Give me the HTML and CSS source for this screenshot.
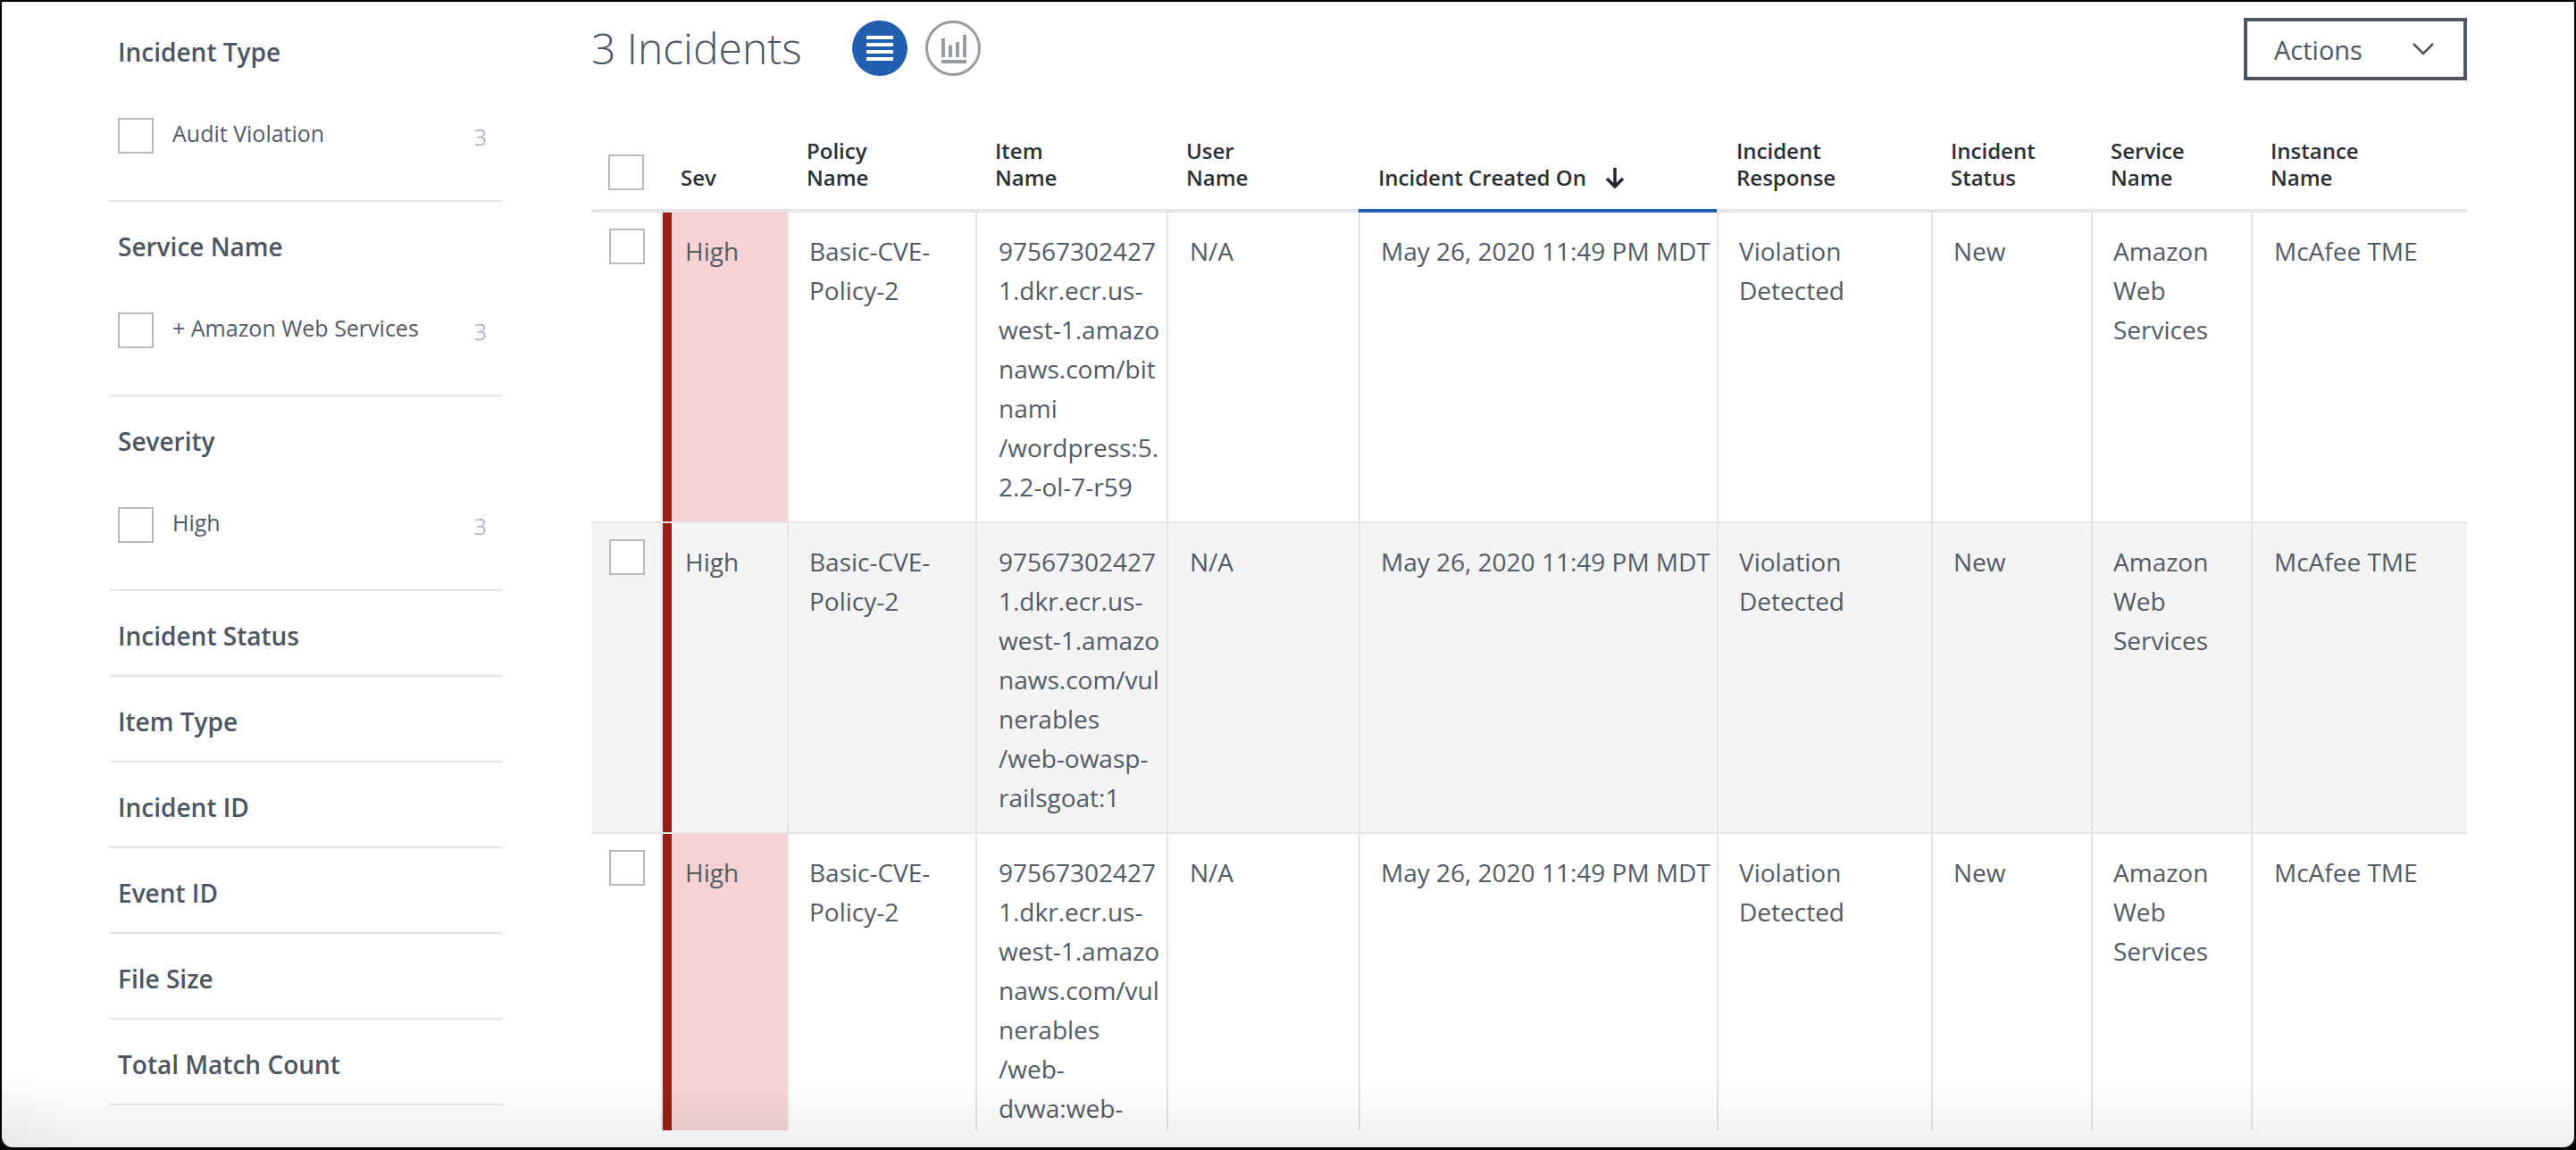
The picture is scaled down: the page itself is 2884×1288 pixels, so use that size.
FILE: index.html
```html
<!DOCTYPE html>
<html lang="en">
<head>
<meta charset="utf-8">
<title>3 Incidents</title>
<link rel="stylesheet" href="styles.css">
</head>
<body>
<div class="window">
  <aside class="sidebar">
    <section class="facet">
      <h3>Incident Type</h3>
      <div class="filter"><span class="box"></span><span class="label">Audit Violation</span><span class="count">3</span></div>
    </section>
    <section class="facet">
      <h3>Service Name</h3>
      <div class="filter"><span class="box"></span><span class="label">+ Amazon Web Services</span><span class="count">3</span></div>
    </section>
    <section class="facet">
      <h3>Severity</h3>
      <div class="filter"><span class="box"></span><span class="label">High</span><span class="count">3</span></div>
    </section>
    <section class="facet"><h3>Incident Status</h3></section>
    <section class="facet"><h3>Item Type</h3></section>
    <section class="facet"><h3>Incident ID</h3></section>
    <section class="facet"><h3>Event ID</h3></section>
    <section class="facet"><h3>File Size</h3></section>
    <section class="facet"><h3>Total Match Count</h3></section>
  </aside>
  <main class="main">
    <div class="toolbar">
      <h1 class="title">3 Incidents</h1>
      <span class="view view-on">
        <svg width="30" height="28" viewBox="0 0 30 28"><path d="M0 2h30M0 10h30M0 18h30M0 26h30" stroke="#fff" stroke-width="4.2" fill="none"/></svg>
      </span>
      <span class="view view-off">
        <svg class="chart" width="28" height="32" viewBox="0 0 28 32"><path d="M0 4h4v21.3H0zM8 11.7h4v13.6H8zM16 8h4v17.3h-4zM24 0h4v25.3h-4zM0 28h28v4H0z" fill="#979ca3"/></svg>
      </span>
      <button class="actions">Actions
        <svg width="26" height="16" viewBox="0 0 26 16"><path d="M2 2l11 11L24 2" stroke="#4d5561" stroke-width="2.5" fill="none"/></svg>
      </button>
    </div>
    <div class="table-clip">
      <table class="grid">
        <colgroup>
          <col class="c-check"><col class="c-sev"><col class="c-policy"><col class="c-item"><col class="c-user"><col class="c-date"><col class="c-resp"><col class="c-status"><col class="c-svc"><col class="c-inst">
        </colgroup>
        <thead>
          <tr>
            <th class="th-check"><span class="box"></span></th>
            <th>Sev</th>
            <th>Policy<br>Name</th>
            <th>Item<br>Name</th>
            <th>User<br>Name</th>
            <th class="sorted">Incident Created On
              <svg class="arrow" width="24" height="24" viewBox="0 0 24 24"><path d="M12 1v20M3 13l9 9 9-9" stroke="#23272c" stroke-width="3.5" fill="none"/></svg>
            </th>
            <th>Incident<br>Response</th>
            <th>Incident<br>Status</th>
            <th>Service<br>Name</th>
            <th>Instance<br>Name</th>
          </tr>
        </thead>
        <tbody>
          <tr>
            <td class="td-check"><span class="box"></span></td>
            <td class="sev">High</td>
            <td>Basic-CVE-<br>Policy-2</td>
            <td class="wide">97567302427<br>1.dkr.ecr.us-<br>west-1.amazo<br>naws.com/bit<br>nami<br>/wordpress:5.<br>2.2-ol-7-r59</td>
            <td class="wide">N/A</td>
            <td class="nowrap">May 26, 2020 11:49 PM MDT</td>
            <td>Violation<br>Detected</td>
            <td>New</td>
            <td>Amazon<br>Web<br>Services</td>
            <td class="wide">McAfee TME</td>
          </tr>
          <tr class="alt">
            <td class="td-check"><span class="box"></span></td>
            <td class="sev">High</td>
            <td>Basic-CVE-<br>Policy-2</td>
            <td class="wide">97567302427<br>1.dkr.ecr.us-<br>west-1.amazo<br>naws.com/vul<br>nerables<br>/web-owasp-<br>railsgoat:1</td>
            <td class="wide">N/A</td>
            <td class="nowrap">May 26, 2020 11:49 PM MDT</td>
            <td>Violation<br>Detected</td>
            <td>New</td>
            <td>Amazon<br>Web<br>Services</td>
            <td class="wide">McAfee TME</td>
          </tr>
          <tr>
            <td class="td-check"><span class="box"></span></td>
            <td class="sev">High</td>
            <td>Basic-CVE-<br>Policy-2</td>
            <td class="wide">97567302427<br>1.dkr.ecr.us-<br>west-1.amazo<br>naws.com/vul<br>nerables<br>/web-<br>dvwa:web-</td>
            <td class="wide">N/A</td>
            <td class="nowrap">May 26, 2020 11:49 PM MDT</td>
            <td>Violation<br>Detected</td>
            <td>New</td>
            <td>Amazon<br>Web<br>Services</td>
            <td class="wide">McAfee TME</td>
          </tr>
        </tbody>
      </table>
    </div>
  </main>
</div>
</body>
</html>
```
FILE: styles.css
```css
* { box-sizing: border-box; }
html, body { margin: 0; height: 100%; }
body {
  background: #000;
  padding: 2px;
  font-family: "Open Sans", "Liberation Sans", sans-serif;
  color: #535b65;
  overflow: hidden;
}
.window {
  position: relative;
  display: flex;
  gap: 100px;
  height: 1283px;
  padding: 0 120px 0 120px;
  background: #fff;
  border-radius: 0 0 12px 12px;
  overflow: hidden;
}
.window::after {
  content: "";
  position: absolute;
  inset: 0;
  pointer-events: none;
  background:
    radial-gradient(90px 90px at 0 100%, rgba(0, 0, 0, 0.035), rgba(0, 0, 0, 0)),
    linear-gradient(to top, rgba(0, 0, 0, 0.065), rgba(0, 0, 0, 0) 75px);
}

/* Sidebar */
.sidebar { width: 440px; flex: none; padding-top: 6px; }
.facet { padding: 32px 17px 26px 10px; border-bottom: 2px solid #e4e5e7; }
.facet h3 {
  margin: 0;
  font-size: 28px;
  line-height: 36px;
  font-weight: 600;
  color: #4d5561;
}
.filter {
  display: flex;
  align-items: center;
  margin: 56px 0 26px 0;
}
.box {
  display: block;
  width: 40px;
  height: 40px;
  flex: none;
  border: 2px solid #b5bac0;
  background: #fff;
}
.label { margin-left: 21px; font-size: 25px; line-height: 32px; padding-bottom: 6px; }
.count { margin-left: auto; font-size: 25px; line-height: 32px; padding-top: 2px; color: #989ea5; font-weight: 300; }

/* Toolbar */
.main { width: 2100px; flex: none; }
.toolbar { display: flex; align-items: center; height: 70px; margin-top: 18px; }
.title {
  margin: -2px 0 0;
  width: 292px;
  font-size: 48px;
  line-height: 70px;
  font-weight: 300;
  color: #4d5561;
}
.view {
  display: flex;
  align-items: center;
  justify-content: center;
  width: 62px;
  height: 62px;
  border-radius: 50%;
  margin-top: -2px;
}
.view-on { background: #225fb0; }
.view-off { margin-left: 20px; border: 3px solid #979ca3; }
.chart { margin: 2px 0 0 1px; }
.actions {
  display: flex;
  align-items: center;
  justify-content: space-between;
  width: 250px;
  height: 70px;
  margin-left: auto;
  padding: 0 32px 0 30px;
  background: #fff;
  border: 4px solid #4d5561;
  font: 400 29px "Open Sans", "Liberation Sans", sans-serif;
  color: #4d5561;
}

/* Table */
.table-clip { height: 1113px; margin-top: 63px; overflow: hidden; }
.grid { width: 2100px; table-layout: fixed; border-collapse: separate; border-spacing: 0; }
.c-check { width: 78px; }
.c-sev { width: 141px; }
.c-policy { width: 211px; }
.c-item { width: 214px; }
.c-user { width: 215px; }
.c-date { width: 401px; }
.c-resp { width: 240px; }
.c-status { width: 179px; }
.c-svc { width: 179px; }
.c-inst { width: 242px; }
th {
  height: 85px;
  padding: 0 0 20px 22px;
  vertical-align: bottom;
  text-align: left;
  font-size: 24px;
  line-height: 30px;
  font-weight: 600;
  color: #2b3036;
  border-bottom: 4px solid #e4e5e7;
}
th.th-check { padding: 0 0 21px 19px; }
th.sorted { border-bottom-color: #225fb0; }
.arrow { margin-left: 14px; vertical-align: -3px; }
td {
  padding: 21px 0 17px 23px;
  vertical-align: top;
  font-size: 28px;
  line-height: 44px;
  border-left: 2px solid #e4e5e7;
  border-bottom: 2px solid #e4e5e7;
}
td.wide { padding-left: 24px; }
td.td-check { padding: 18px 0 0 20px; border-left: 0; }
td.sev {
  padding-left: 25px;
  background: #f6d2d3;
  box-shadow: inset 10px 0 0 #991f14;
}
td.nowrap { white-space: nowrap; }
.alt td, .alt td.sev { background: #f4f4f5; }
```
